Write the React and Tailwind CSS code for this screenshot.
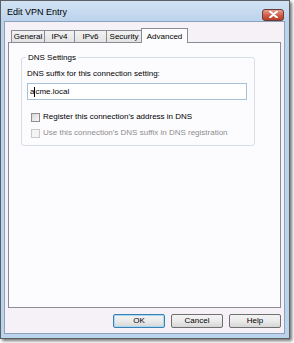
import React from "react";

const tabs = [
  { name: "General", w: "w-[33px]" },
  { name: "IPv4", w: "w-[30px]" },
  { name: "IPv6", w: "w-[32px]" },
  { name: "Security", w: "w-[35px]" },
];

const Checkbox = ({ label, disabled }) => (
  <div className="flex items-center gap-[3px] h-[16px]">
    <span
      className={
        "w-[9px] h-[9px] border " +
        (disabled
          ? "border-[#c9c9c9] bg-[#f4f4f4]"
          : "border-[#8e8f8f] bg-gradient-to-br from-[#d8d8d8] to-[#f7f7f7]")
      }
    />
    <span className={disabled ? "text-[#8d8d8d]" : "text-black"}>{label}</span>
  </div>
);

const Button = ({ children, focused }) => (
  <button
    className={
      "w-[52px] h-[14px] rounded-[2px] border text-[8px] leading-none bg-gradient-to-b from-[#f3f3f3] via-[#ebebeb] to-[#d6d6d6] " +
      (focused ? "border-[#3c7fb1] shadow-[inset_0_0_0_1px_#a8d8f3]" : "border-[#707070]")
    }
  >
    {children}
  </button>
);

export default function App() {
  return (
    <div className="w-[294px] h-[343px] bg-white font-['Liberation_Sans',Arial,sans-serif] text-[8px] text-black">
      <div className="w-[290px] h-[339px] border border-[#5a5f66] bg-[#bcd3ec] shadow-[2px_2px_3px_rgba(0,0,0,0.55)] flex flex-col">
        <div className="h-[20px] flex items-center justify-between pl-[6px] pr-[5px] bg-gradient-to-b from-[#d3e3f4] to-[#bcd3ec]">
          <span className="text-[9px] pt-[4px] text-black">Edit VPN Entry</span>
          <div className="mt-[7px] w-[22px] h-[12px] rounded-[3px] border border-[#6d3b35] bg-gradient-to-b from-[#e4a091] via-[#d0604b] to-[#b93c26] flex items-center justify-center">
            <svg width="9" height="7" viewBox="0 0 9 7">
              <path d="M1 0.5 L8 6.5 M8 0.5 L1 6.5" stroke="#ffffff" strokeWidth="2" strokeLinecap="round" />
            </svg>
          </div>
        </div>
        <div className="flex-1 ml-[3px] mr-[4px] mb-[4px] border border-[#8aa2bd] bg-[#f5f1f6] flex flex-col px-[3px]">
          <div className="flex items-end h-[20px] pl-[3px]">
            {tabs.map((t) => (
              <div
                key={t.name}
                className={
                  t.w +
                  " h-[12px] border border-b-0 border-r-0 border-[#898c95] bg-gradient-to-b from-[#f2f2f2] to-[#e3e3e3] flex items-center justify-center"
                }
              >
                {t.name}
              </div>
            ))}
            <div className="w-[47px] h-[15px] -mb-px border border-b-0 border-[#898c95] bg-[#fcfcfe] pt-[2px] text-center z-10">
              Advanced
            </div>
          </div>
          <div className="h-[266px] border border-[#898c95] bg-[#fcfcfe] pt-[14px] pl-[12px] pr-[25px]">
            <div className="relative border border-[#d5dfe5] rounded-[3px] h-[89px] pl-[5px] pr-[7px] pt-[10px]">
              <span className="absolute -top-[6px] left-[4px] bg-[#fcfcfe] px-[2px]">DNS Settings</span>
              <div>DNS suffix for this connection setting:</div>
              <div className="mt-[3px] h-[17px] border border-[#a9c1d8] bg-white flex items-center pl-[2px]">
                a<span className="w-px h-[10px] bg-black" />cme.local
              </div>
              <div className="mt-[9px] pl-[4px] flex flex-col">
                <Checkbox label="Register this connection's address in DNS" />
                <Checkbox label="Use this connection's DNS suffix in DNS registration" disabled />
              </div>
            </div>
          </div>
          <div className="flex justify-end gap-[6px] mt-[6px]">
            <Button focused>OK</Button>
            <Button>Cancel</Button>
            <Button>Help</Button>
          </div>
        </div>
      </div>
    </div>
  );
}
